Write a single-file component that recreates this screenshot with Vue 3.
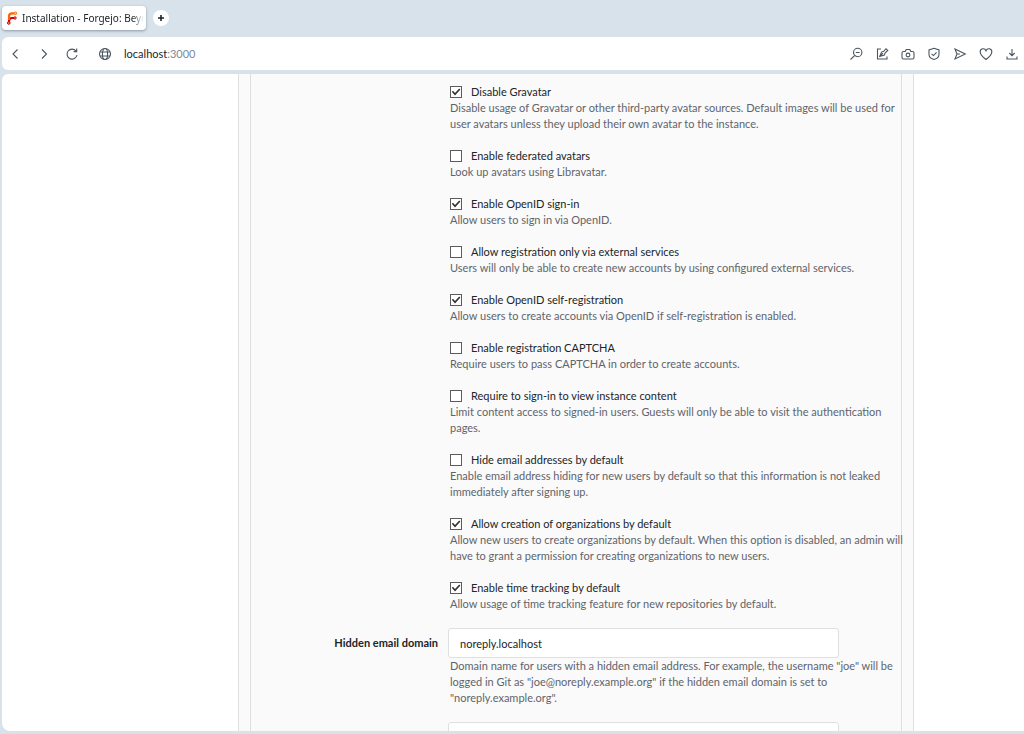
<script setup>
import { ref } from 'vue'

const options = ref([
  { id: 'gravatar', on: true, label: 'Disable Gravatar', help: 'Disable usage of Gravatar or other third-party avatar sources. Default images will be used for\nuser avatars unless they upload their own avatar to the instance.' },
  { id: 'federated', on: false, label: 'Enable federated avatars', help: 'Look up avatars using Libravatar.' },
  { id: 'openid-signin', on: true, label: 'Enable OpenID sign-in', help: 'Allow users to sign in via OpenID.' },
  { id: 'external', on: false, label: 'Allow registration only via external services', help: 'Users will only be able to create new accounts by using configured external services.' },
  { id: 'openid-signup', on: true, label: 'Enable OpenID self-registration', help: 'Allow users to create accounts via OpenID if self-registration is enabled.' },
  { id: 'captcha', on: false, label: 'Enable registration CAPTCHA', help: 'Require users to pass CAPTCHA in order to create accounts.' },
  { id: 'require-signin', on: false, label: 'Require to sign-in to view instance content', help: 'Limit content access to signed-in users. Guests will only be able to visit the authentication\npages.' },
  { id: 'hide-email', on: false, label: 'Hide email addresses by default', help: 'Enable email address hiding for new users by default so that this information is not leaked\nimmediately after signing up.' },
  { id: 'organizations', on: true, label: 'Allow creation of organizations by default', help: 'Allow new users to create organizations by default. When this option is disabled, an admin will\nhave to grant a permission for creating organizations to new users.' },
  { id: 'time-tracking', on: true, label: 'Enable time tracking by default', help: 'Allow usage of time tracking feature for new repositories by default.' },
])
const domain = ref('noreply.localhost')
const domainHelp = 'Domain name for users with a hidden email address. For example, the username "joe" will be\nlogged in Git as "joe@noreply.example.org" if the hidden email domain is set to\n"noreply.example.org".'
const algorithm = ref('')
</script>

<template>
  <div class="browser">
    <header class="tabs">
      <div class="tab">
        <svg class="favicon" viewBox="0 0 12 14" fill="none" aria-hidden="true">
          <path d="M3 11.500V10q0-3 3-3h2.500" stroke="#d40000" stroke-width="2.200" />
          <path d="M3 9V5.500Q3 2.300 6 2.300h2.500" stroke="#ff6600" stroke-width="2.200" />
          <circle cx="9.400" cy="2.300" r="1.300" stroke="#ff6600" fill="#ffc9a3" />
          <circle cx="9" cy="7" r="1.200" stroke="#d40000" fill="#f0a0a0" />
          <circle cx="2.800" cy="12" r="1.300" stroke="#d40000" fill="#f0a0a0" />
        </svg>
        <span class="tab-title">Installation - Forgejo: Beyo</span>
      </div>
      <button class="new-tab" aria-label="New tab">
        <svg viewBox="0 0 8 8" fill="none" stroke="#1c2329" stroke-width="1.600"><path d="M4 1v6M1 4h6" /></svg>
      </button>
    </header>

    <nav class="toolbar">
      <button aria-label="Back"><svg viewBox="0 0 14 14"><path d="M8.500 2.500 4 7l4.500 4.500" /></svg></button>
      <button aria-label="Forward"><svg viewBox="0 0 14 14"><path d="m5 2.500 4.500 4.500L5 11.500" /></svg></button>
      <button aria-label="Reload"><svg viewBox="0 0 14 14"><path d="M11 4A5 5 0 1 0 12 8M11.700 1.500v3.100H8.600" /></svg></button>
      <button class="site" aria-label="Site information"><svg viewBox="0 0 14 14"><circle cx="7" cy="7" r="5.500" /><ellipse cx="7" cy="7" rx="2.600" ry="5.500" /><path d="M2 5h10M2 9h10" /></svg></button>
      <div class="address">localhost<span>:3000</span></div>
      <div class="tools">
        <button aria-label="Zoom"><svg viewBox="0 0 14 14"><circle cx="8.700" cy="5.500" r="4.200" /><path d="M5.600 8.600 1.500 12.500M6.800 5.500h3.800" /></svg></button>
        <button aria-label="Edit page"><svg viewBox="0 0 14 14"><path d="M6 2H2.500v10H12V9.500M4.800 9.300l1.700-4.200 2.200-.8 2.300-2.600 1.800 1.800-2.600 2.300-.8 2.200zL8 6.200" /></svg></button>
        <button aria-label="Snapshot"><svg viewBox="0 0 14 14"><path d="M2.500 4.500h1.700L5.200 2.500h3.600l1 2h1.700q1.500 0 1.500 1.500v4.500q0 1.500-1.500 1.500h-9Q1 12 1 10.500V6q0-1.500 1.500-1.500z" /><circle cx="7" cy="8" r="1.900" /></svg></button>
        <button aria-label="Ad blocker"><svg viewBox="0 0 14 14"><path d="M7 1.300 12 3v4.500C12 10 9.500 11.800 7 12.500 4.500 11.800 2 10 2 7.500V3zM4.600 6.900l1.800 1.700 3.200-3.200" /></svg></button>
        <button aria-label="Send"><svg viewBox="0 0 14 14"><path d="M2 2 12.300 7 2 12l2-5zM4 7h3" /></svg></button>
        <button aria-label="Favourite"><svg viewBox="0 0 14 14"><path d="M7 12.500C3 9.500 1.200 7.500 1.200 5A3 3 0 0 1 7 3.700 3 3 0 0 1 12.800 5c0 2.500-1.800 4.500-5.800 7.500z" /></svg></button>
        <button aria-label="Downloads"><svg viewBox="0 0 14 14"><path d="M7 2v6.500M4.300 6 7 8.700 9.700 6M2 9.500v2.500h10V9.500" /></svg></button>
      </div>
    </nav>

    <main class="page">
      <div class="container">
        <form class="segment" @submit.prevent>
          <div v-for="o in options" :key="o.id" class="option">
            <div class="check">
              <input :id="o.id" v-model="o.on" type="checkbox" />
              <label :for="o.id">{{ o.label }}</label>
            </div>
            <p class="help">{{ o.help }}</p>
          </div>
          <div class="field">
            <label for="domain">Hidden email domain</label>
            <div class="control">
              <input id="domain" v-model="domain" type="text" />
              <p class="help">{{ domainHelp }}</p>
            </div>
          </div>
          <div class="field">
            <span></span>
            <div class="control">
              <input v-model="algorithm" type="text" aria-label="Password hash algorithm" />
            </div>
          </div>
        </form>
      </div>
    </main>
  </div>
</template>

<style>
body {
  margin: 0;
  overflow: hidden;
}
</style>

<style scoped>
.browser {
  box-sizing: border-box;
  display: flex;
  flex-direction: column;
  height: 100vh;
  padding: 6px 0 3px 2px;
  background: #d8e2ea;
  color: #212529;
  font-family: "Segoe UI", Lato, "Noto Sans", sans-serif;
  font-size: 11px;
  line-height: 16px;
}
button {
  display: grid;
  place-items: center;
  padding: 0;
  border: 0;
  background: none;
}
.tabs {
  display: flex;
  align-items: center;
  gap: 7px;
  height: 24px;
}
.tab {
  box-sizing: border-box;
  display: flex;
  align-items: center;
  gap: 4px;
  width: 144px;
  height: 24px;
  padding: 0 2px 0 4px;
  border-radius: 4px;
  background: #fff;
  box-shadow: 0 1px 3px #8b98a5;
}
.favicon {
  flex: none;
  width: 12px;
  height: 14px;
}
.tab-title {
  overflow: hidden;
  white-space: nowrap;
  font-family: "Noto Sans", sans-serif;
  font-size: 10px;
  mask-image: linear-gradient(to right, #000 90%, transparent);
}
.new-tab {
  width: 16px;
  height: 16px;
  border-radius: 8px;
  background: #fff;
}
.new-tab svg {
  width: 8px;
  height: 8px;
}
.toolbar {
  display: flex;
  flex: none;
  align-items: center;
  gap: 14px;
  height: 33px;
  margin-top: 7px;
  padding: 0 5px 0 7px;
  border-radius: 6px 0 0 6px;
  background: #fff;
}
.toolbar button {
  width: 14px;
  height: 14px;
}
.toolbar svg {
  width: 14px;
  height: 14px;
  fill: none;
  stroke: #4b5660;
  stroke-width: 1.1;
}
.toolbar .site {
  margin-left: 5px;
}
.address {
  flex: 1;
  margin-left: -2px;
}
.address span {
  color: #7c8a9a;
}
.tools {
  display: flex;
  gap: 12px;
}
.page {
  flex: 1;
  min-height: 0;
  margin-top: 4px;
  overflow: hidden;
  border-radius: 6px 0 0 8px;
  background: #fff;
}
.container {
  box-sizing: border-box;
  max-width: 676px;
  margin-left: 236px;
  padding: 0 11px;
  border: solid #dddfe1;
  border-width: 0 1px;
  background: #fafafa;
}
.segment {
  padding-top: 10px;
  border: solid #dddfe1;
  border-width: 0 1px;
}
.option {
  margin: 0 0 16px 199px;
}
.check {
  display: flex;
  align-items: center;
  gap: 9px;
}
.check input {
  box-sizing: border-box;
  display: grid;
  place-items: center;
  width: 12px;
  height: 12px;
  margin: 0;
  appearance: none;
  border: 1px solid #5c5c5c;
  background: #fff;
}
.check input:checked::before {
  content: "";
  width: 10px;
  height: 10px;
  background: #333;
  clip-path: polygon(8% 48%, 20% 38%, 40% 60%, 82% 14%, 94% 26%, 40% 84%);
}
.help {
  margin: 0;
  color: #5f646b;
  white-space: pre;
}
.field {
  display: grid;
  grid-template-columns: 187px 1fr;
  gap: 10px;
  margin-bottom: 16px;
}
.field label {
  padding-top: 7px;
  text-align: right;
  font-weight: 700;
}
.control input {
  box-sizing: border-box;
  display: block;
  width: 391px;
  height: 30px;
  padding: 0 11px;
  border: 1px solid #dddfe1;
  border-radius: 3px;
  background: #fff;
  color: #212529;
  font: inherit;
}
.control .help {
  padding-left: 2px;
}
</style>
